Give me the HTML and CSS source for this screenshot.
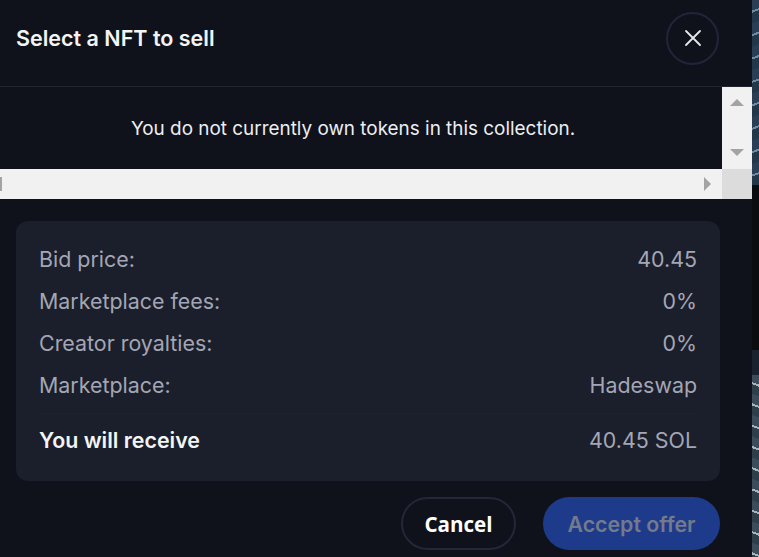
FILE: index.html
```html
<!DOCTYPE html>
<html lang="en">
<head>
<meta charset="utf-8">
<title>Select a NFT to sell</title>
<link rel="stylesheet" href="styles.css">
</head>
<body>
<div class="page">
  <div class="modal">
    <div class="header">
      <h1 class="title">Select a NFT to sell</h1>
      <button class="close" aria-label="Close">
        <svg width="18" height="18" viewBox="0 0 18 18"><path d="M2 2 L16 16 M16 2 L2 16" stroke="#e5e7eb" stroke-width="1.8" stroke-linecap="round"/></svg>
      </button>
    </div>
    <div class="scroller">
      <div class="scroll-content">You do not currently own tokens in this collection.</div>
      <div class="vbar">
        <span class="arrow up"></span>
        <span class="arrow down"></span>
      </div>
      <div class="hbar">
        <span class="left-stub"></span>
        <span class="arrow right"></span>
      </div>
      <div class="corner"></div>
    </div>
    <div class="body">
      <div class="card">
        <div class="row"><span>Bid price:</span><span>40.45</span></div>
        <div class="row"><span>Marketplace fees:</span><span>0%</span></div>
        <div class="row"><span>Creator royalties:</span><span>0%</span></div>
        <div class="row"><span>Marketplace:</span><span>Hadeswap</span></div>
        <div class="divider"></div>
        <div class="row total"><span class="strong">You will receive</span><span>40.45 SOL</span></div>
      </div>
      <div class="actions">
        <button class="btn cancel">Cancel</button>
        <button class="btn accept">Accept offer</button>
      </div>
    </div>
  </div>
  <div class="backdrop">
    <div class="bd1"></div>
    <div class="bd2"></div>
    <div class="bd3"></div>
    <div class="bd4"></div>
  </div>
</div>
</body>
</html>
```

FILE: styles.css
```css
* { box-sizing: border-box; }
html, body { margin: 0; padding: 0; background: #10121b; }
body { font-family: Inter, "Noto Sans", sans-serif; overflow: hidden; }
.page { display: flex; width: 759px; height: 557px; }
.modal { width: 752px; flex: none; background: #10121b; display: flex; flex-direction: column; }
.header {
  height: 87px;
  padding: 12px 33px 22px 16px;
  display: flex; align-items: center; justify-content: space-between;
  border-bottom: 1px solid #21232f;
}
.title { margin: 0; font-size: 21.5px; font-weight: 600; color: #f3f4f6; }
.close {
  width: 53px; height: 53px; border-radius: 50%;
  border: 2px solid #22243a; background: transparent;
  display: flex; align-items: center; justify-content: center; padding: 0;
}
.scroller {
  display: grid;
  grid-template-columns: 722px 30px;
  grid-template-rows: 82px 30px;
}
.scroll-content {
  display: flex; align-items: center; justify-content: center;
  padding-right: 16px;
  font-size: 18.9px; color: #eceef2;
}
.vbar { background: #f1f1f1; position: relative; }
.hbar { background: #f1f1f1; position: relative; }
.corner { background: #dcdcdc; }
.arrow { position: absolute; width: 0; height: 0; }
.arrow.up { left: 8px; top: 12px; border-left: 7px solid transparent; border-right: 7px solid transparent; border-bottom: 7px solid #a3a3a3; }
.arrow.down { left: 8px; top: 62px; border-left: 7px solid transparent; border-right: 7px solid transparent; border-top: 7px solid #a3a3a3; }
.arrow.right { left: 704px; top: 8px; border-top: 7px solid transparent; border-bottom: 7px solid transparent; border-left: 7px solid #a3a3a3; }
.left-stub { position: absolute; left: 0; top: 8px; width: 2px; height: 14px; background: #a3a3a3; }
.body { padding: 22px 32px 0 16px; display: flex; flex-direction: column; gap: 16px; }
.card {
  background: #1b1e2b; border-radius: 12px;
  padding: 24px 23px 27px 23px;
  display: flex; flex-direction: column; gap: 14px;
}
.row { display: flex; justify-content: space-between; line-height: 28px; font-size: 21.4px; color: #a3a6b4; }
.divider { height: 1px; background: #1e2130; margin: 0 0 -2px; }
.strong { color: #f3f4f6; font-weight: 600; }
.actions { display: flex; justify-content: flex-end; gap: 27px; }
.btn { height: 53px; border-radius: 27px; padding: 0; }
.cancel { width: 115px; background: transparent; border: 2px solid #24263a; color: #ffffff; font-family: "Open Sans", sans-serif; font-weight: 700; font-size: 20.6px; }
.accept { width: 177px; background: #1d3b8a; border: none; color: #737a8c; font-family: Inter, sans-serif; font-weight: 600; font-size: 21.3px; }
.backdrop { flex: 1; display: flex; flex-direction: column; }
.bd1 { height: 185px; background: repeating-linear-gradient(160deg, #2a3f55 0 10px, #6e8ba3 10px 12px, #23374b 12px 22px); }
.bd2 { height: 165px; background: #0b0c10; }
.bd3 { height: 25px; background: #1a2230; }
.bd4 { flex: 1; background: repeating-linear-gradient(200deg, #3c4c5a 0 9px, #a9b4bd 9px 11px, #2f3e4b 11px 20px); }
```
